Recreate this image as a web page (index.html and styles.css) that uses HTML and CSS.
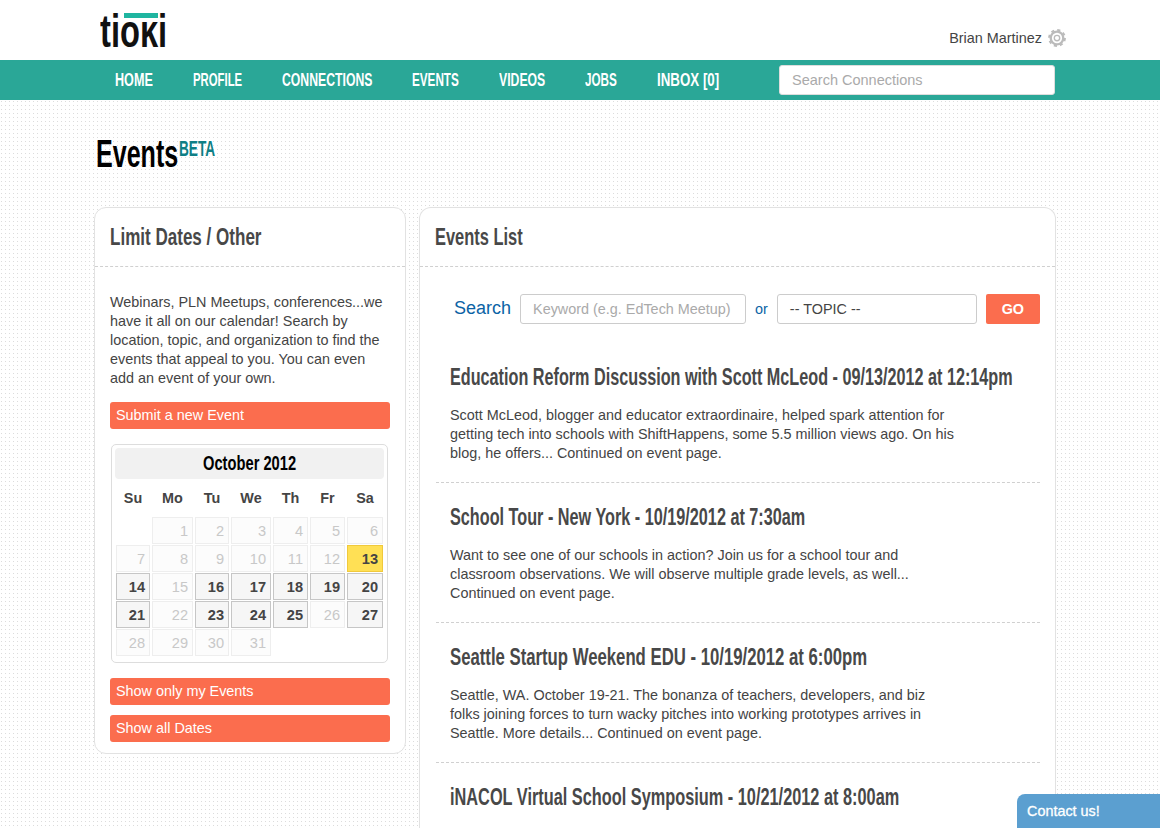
FILE: index.html
```html
<!DOCTYPE html>
<html>
<head>
	<meta charset="utf-8">
	<title>Events</title>
	<link rel="stylesheet" href="styles.css">
</head>
<body>
	<div class="topbar">
		<div class="wrap topbar-in">
			<a class="logo"><span class="cond logo-txt">tioki</span><span class="logo-bar"></span></a>
			<div class="user">
				<span>Brian Martinez</span>
				<svg class="gear" width="18" height="18" viewBox="0 0 20 20" fill="none" stroke="#bbb">
					<circle cx="10" cy="10" r="7" stroke-width="2.600"/>
					<circle cx="10" cy="10" r="8.800" stroke-width="2.200" stroke-dasharray="3.450 3.460"/>
					<circle cx="10" cy="10" r="3" stroke-width="1.500"/>
				</svg>
			</div>
		</div>
	</div>
	<div class="nav">
		<div class="wrap nav-in">
			<a class="n1"><span class="cond">HOME</span></a>
			<a class="n2"><span class="cond">PROFILE</span></a>
			<a class="n3"><span class="cond">CONNECTIONS</span></a>
			<a class="n4"><span class="cond">EVENTS</span></a>
			<a class="n5"><span class="cond">VIDEOS</span></a>
			<a class="n6"><span class="cond">JOBS</span></a>
			<a class="n7"><span class="cond">INBOX [0]</span></a>
			<div class="nav-search">Search Connections</div>
		</div>
	</div>

	<div class="wrap">
		<h1 class="page-title"><span class="title-main"><span class="cond">Events</span></span><span class="title-beta"><span class="cond">BETA</span></span></h1>
		<div class="cols">
			<div class="card side">
				<h2 class="card-title"><span class="cond t-limit">Limit Dates / Other</span></h2>
				<div class="side-body">
					<p class="intro">Webinars, PLN Meetups, conferences...we have it all on our calendar! Search by location, topic, and organization to find the events that appeal to you. You can even add an event of your own.</p>
					<a class="btn">Submit a new Event</a>
					<div class="cal">
						<div class="cal-head"><span class="cond">October 2012</span></div>
						<div class="cal-days">
							<span>Su</span><span>Mo</span><span>Tu</span><span>We</span><span>Th</span><span>Fr</span><span>Sa</span>
						</div>
						<div class="cal-grid">
							<i></i><i>1</i><i>2</i><i>3</i><i>4</i><i>5</i><i>6</i>
							<i>7</i><i>8</i><i>9</i><i>10</i><i>11</i><i>12</i><b class="today">13</b>
							<b>14</b><i>15</i><b>16</b><b>17</b><b>18</b><b>19</b><b>20</b>
							<b>21</b><i>22</i><b>23</b><b>24</b><b>25</b><i>26</i><b>27</b>
							<i>28</i><i>29</i><i>30</i><i>31</i>
						</div>
					</div>
					<a class="btn">Show only my Events</a>
					<a class="btn">Show all Dates</a>
				</div>
			</div>

			<div class="card main">
				<h2 class="card-title"><span class="cond t-list">Events List</span></h2>
				<div class="search-row">
					<span class="search-lbl">Search</span>
					<div class="field kw">Keyword (e.g. EdTech Meetup)</div>
					<span class="or">or</span>
					<div class="field topic">-- TOPIC --</div>
					<a class="go">GO</a>
				</div>
				<div class="event">
					<h3><span class="cond e1">Education Reform Discussion with Scott McLeod - 09/13/2012 at 12:14pm</span></h3>
					<p>Scott McLeod, blogger and educator extraordinaire, helped spark attention for getting tech into schools with ShiftHappens, some 5.5 million views ago. On his blog, he offers... Continued on event page.</p>
				</div>
				<div class="event">
					<h3><span class="cond e2">School Tour - New York - 10/19/2012 at 7:30am</span></h3>
					<p>Want to see one of our schools in action? Join us for a school tour and classroom observations. We will observe multiple grade levels, as well... Continued on event page.</p>
				</div>
				<div class="event">
					<h3><span class="cond e3">Seattle Startup Weekend EDU - 10/19/2012 at 6:00pm</span></h3>
					<p>Seattle, WA. October 19-21. The bonanza of teachers, developers, and biz folks joining forces to turn wacky pitches into working prototypes arrives in Seattle. More details... Continued on event page.</p>
				</div>
				<div class="event last">
					<h3><span class="cond e4">iNACOL Virtual School Symposium - 10/21/2012 at 8:00am</span></h3>
				</div>
			</div>
		</div>
	</div>
	<a class="contact">Contact us!</a>
</body>
</html>
```

FILE: styles.css
```css
* {
	margin: 0;
	padding: 0;
	box-sizing: border-box;
}
html, body {
	height: 828px;
	overflow: hidden;
}
body {
	font-family: "Liberation Sans", Arial, sans-serif;
	font-size: 14.4px;
	line-height: 19px;
	color: #444;
	background-color: #fff;
	background-image: radial-gradient(circle at 1.5px 1.5px, #dcdcdc .8px, transparent 1px);
	background-size: 4px 4px;
}
.wrap {
	width: 962px;
	margin-left: 94px;
}

/* no condensed font here, so squeeze bold sans */
.cond {
	display: inline-block;
	font-weight: bold;
	white-space: nowrap;
	transform-origin: 0 50%;
	transform: scaleX(.68);
}

/* top */
.topbar {
	height: 60px;
	background: #fff;
}
.topbar-in {
	display: flex;
	justify-content: space-between;
}
.logo {
	position: relative;
	display: block;
	margin: 6px 0 0 6px;
	font-size: 46px;
	line-height: 50px;
	color: #111;
}
.logo-txt {
	transform: scaleX(.71);
}
.logo-bar {
	position: absolute;
	left: 24px;
	top: 7px;
	width: 34px;
	height: 9px;
	background: #fff;
	border-top: 5px solid #1fb5a0;
	box-shadow: 0 -3px 0 #fff;
}
.user {
	display: flex;
	align-items: center;
	gap: 6px;
	height: 18px;
	margin: 29px -10px 0 0;
}

/* nav */
.nav {
	height: 40px;
	background: #2aa797;
}
.nav-in {
	display: flex;
	align-items: center;
	gap: 40px;
	height: 40px;
	padding-left: 21px;
}
.nav-in a {
	font-size: 18px;
	color: #fff;
}
.n1 { width: 38px; }
.n2 { width: 49px; }
.n3 { width: 90px; }
.n4 { width: 47px; }
.n5 { width: 46px; }
.n6 { width: 32px; }
.n7 { width: 63px; }
.n1 .cond { transform: scaleX(.7); }
.n2 .cond { transform: scaleX(.63); }
.n3 .cond { transform: scaleX(.68); }
.n4 .cond { transform: scaleX(.65); }
.n5 .cond { transform: scaleX(.68); }
.n6 .cond { transform: scaleX(.65); }
.n7 .cond { transform: scaleX(.74); }
.nav-search {
	width: 276px;
	height: 30px;
	margin-left: 19px;
	padding: 0 12px;
	line-height: 29px;
	font-size: 14.5px;
	white-space: nowrap;
	color: #aaa;
	background: #fff;
	border: 1px solid #ddd;
	border-radius: 3px;
}

/* heading */
.page-title {
	display: flex;
	height: 107px;
	padding: 31px 0 0 2px;
	font-weight: normal;
	font-size: 38px;
	line-height: 46px;
	color: #000;
}
.title-main {
	width: 83px;
}
.title-main .cond {
	transform: scaleX(.66);
}
.title-beta {
	width: 36px;
	margin-top: 7px;
	font-size: 22px;
	line-height: 22px;
	color: #0e7f86;
}
.title-beta .cond {
	transform: scaleX(.62);
}

/* cards */
.cols {
	display: flex;
	gap: 13px;
	align-items: flex-start;
}
.card {
	background: #fff;
	border: 1px solid #e2e2e2;
	border-radius: 12px;
}
.side {
	width: 312px;
	height: 547px;
}
.main {
	width: 637px;
	height: 621px;
	border-bottom: 0;
	border-radius: 12px 12px 0 0;
}
.card-title {
	height: 59px;
	padding: 12px 15px 0;
	border-bottom: 1px dashed #d0d0d0;
	font-weight: normal;
	font-size: 24px;
	line-height: 34px;
	color: #484848;
}
.t-limit { transform: scaleX(.71); }
.t-list { transform: scaleX(.685); }
.side-body {
	padding: 26px 15px 0;
}
.intro {
	margin-bottom: 14px;
}
.btn {
	display: block;
	height: 27px;
	margin-bottom: 10px;
	padding-left: 6px;
	line-height: 26px;
	color: #fff;
	background: #fb6d4e;
	border-radius: 3px;
}

/* calendar */
.cal {
	width: 277px;
	height: 219px;
	margin: 15px 0 15px 1px;
	padding: 3px;
	border: 1px solid #ddd;
	border-radius: 5px;
}
.cal-head {
	height: 31px;
	font-size: 21px;
	line-height: 30px;
	color: #000;
	background: #f1f1f1;
	border-radius: 4px;
}
.cal-head .cond {
	display: block;
	margin-left: 88px;
	transform: scaleX(.7);
}
.cal-days,
.cal-grid {
	display: grid;
	grid-template-columns: 34px 41px 34px 40px 35px 35px 36px;
	column-gap: 2px;
	margin-left: 1px;
}
.cal-days {
	height: 38px;
	padding-top: 10px;
	font-weight: bold;
	text-align: center;
}
.cal-grid {
	grid-auto-rows: 27px;
	row-gap: 1px;
	font-size: 14.6px;
	line-height: 26px;
	text-align: right;
}
.cal-grid i, .cal-grid b {
	display: block;
	padding-right: 4px;
	font-style: normal;
}
.cal-grid i {
	color: #c8c8c8;
	background: #fcfcfc;
	border: 1px solid #eee;
}
.cal-grid i:empty {
	background: none;
	border: 0;
}
.cal-grid b {
	color: #444;
	background: #f6f6f6;
	border: 1px solid #c6c6c6;
}
.cal-grid b.today {
	background: #ffe055;
	border-color: #f0c93c;
}

/* search row */
.search-row {
	display: flex;
	align-items: center;
	height: 30px;
	margin: 27px 15px 0 0;
	padding-left: 34px;
}
.search-lbl {
	margin-top: -2px;
	font-size: 18px;
	color: #0b63a5;
}
.field {
	height: 30px;
	padding: 0 12px;
	line-height: 28px;
	white-space: nowrap;
	background: #fff;
	border: 1px solid #ccc;
	border-radius: 3px;
}
.kw {
	width: 226px;
	margin-left: 9px;
	color: #aaa;
}
.or {
	margin: 0 9px;
	color: #0b63a5;
}
.topic {
	width: 200px;
}
.go {
	width: 54px;
	height: 30px;
	margin-left: 9px;
	font-weight: bold;
	line-height: 30px;
	text-align: center;
	color: #fff;
	background: #fb6d4e;
	border-radius: 2px;
}

/* events */
.event {
	height: 140px;
	margin: 0 15px 0 16px;
	padding: 17px 14px 0;
	border-bottom: 1px dashed #d0d0d0;
}
.search-row + .event {
	margin-top: 19px;
}
.event.last {
	height: auto;
	border-bottom: 0;
}
.event h3 {
	margin-bottom: 12px;
	font-weight: normal;
	font-size: 24px;
	line-height: 34px;
	color: #484848;
}
.event h3 .cond {
	width: 100%;
}
.e1 { transform: scaleX(.675); }
.e2 { transform: scaleX(.676); }
.e3 { transform: scaleX(.697); }
.e4 { transform: scaleX(.68); }
.event p {
	width: 505px;
}

.contact {
	position: fixed;
	right: 0;
	bottom: 0;
	width: 143px;
	height: 34px;
	padding-left: 10px;
	line-height: 34px;
	color: #fff;
	background: #5b9fd0;
	border-top-left-radius: 8px;
	-webkit-text-stroke: .3px #fff;
}
```
